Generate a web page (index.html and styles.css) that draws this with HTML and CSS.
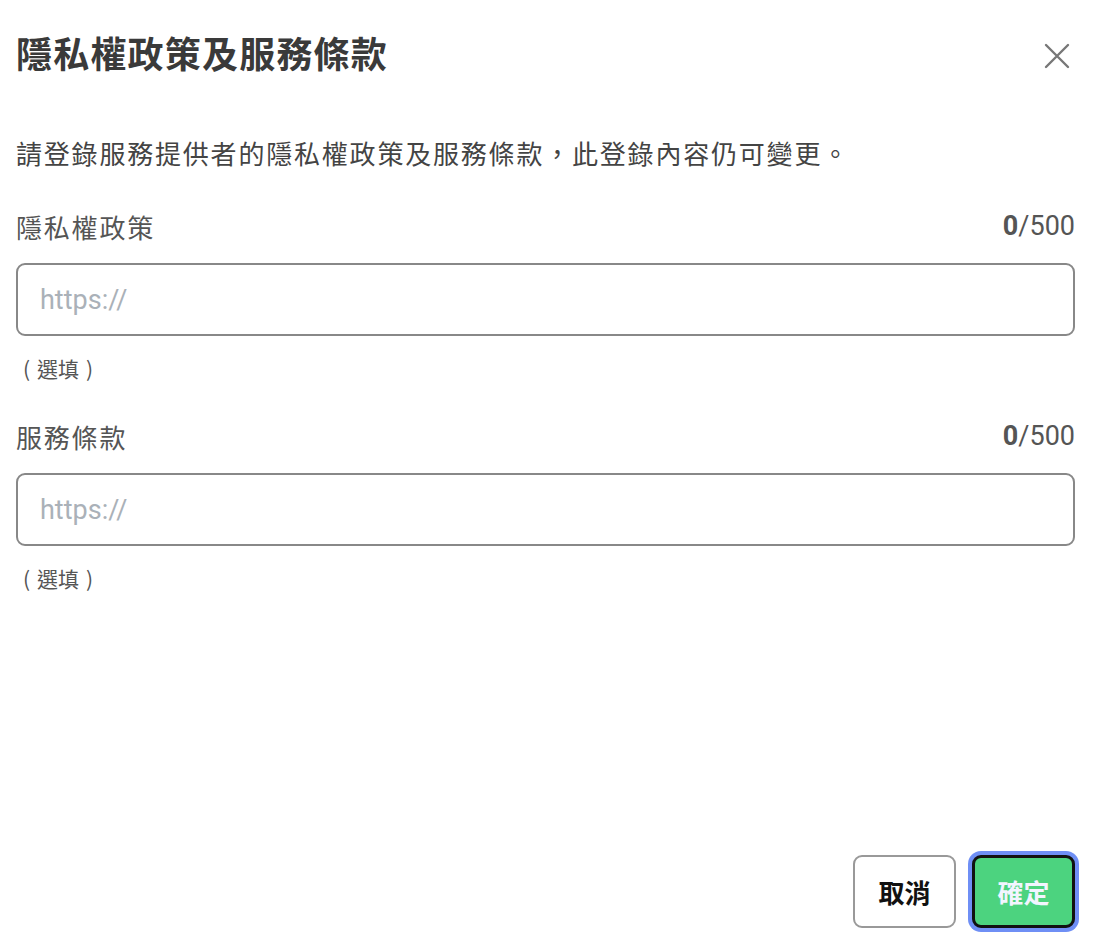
FILE: index.html
```html
<!DOCTYPE html>
<html lang="zh-TW">

<head>
    <meta charset="UTF-8">
    <meta name="viewport" content="width=device-width, initial-scale=1.0">
    <title>隱私權政策及服務條款</title>
    <link rel="stylesheet" href="styles.css">
</head>

<body>
    <div class="dialog">
        <div class="dialog-header">
            <h1 class="dialog-title">隱私權政策及服務條款</h1>
            <button class="close-button" aria-label="關閉">
                <svg width="28" height="28" viewBox="0 0 28 28">
                    <path d="M3 3 L25 25 M25 3 L3 25" stroke="#777" stroke-width="2.4" stroke-linecap="round" fill="none" />
                </svg>
            </button>
        </div>

        <p class="dialog-description">請登錄服務提供者的隱私權政策及服務條款，此登錄內容仍可變更。</p>

        <div class="field">
            <div class="field-label">
                <span>隱私權政策</span>
                <span class="counter"><strong>0</strong>/500</span>
            </div>
            <input class="field-input" type="text" placeholder="https://">
            <p class="field-hint"><span class="paren">(</span>選填<span class="paren">)</span></p>
        </div>

        <div class="field">
            <div class="field-label">
                <span>服務條款</span>
                <span class="counter"><strong>0</strong>/500</span>
            </div>
            <input class="field-input" type="text" placeholder="https://">
            <p class="field-hint"><span class="paren">(</span>選填<span class="paren">)</span></p>
        </div>

        <div class="dialog-footer">
            <button class="btn btn-cancel">取消</button>
            <button class="btn btn-confirm">確定</button>
        </div>
    </div>
</body>

</html>
```

FILE: styles.css
```css
body {
    margin: 0;
    padding: 0;
    background-color: #ffffff;
    font-family: Roboto, "Noto Sans CJK TC", sans-serif;
    color: #333333;
}

.dialog {
    box-sizing: border-box;
    min-height: 941px;
    padding: 32px 25px 13px 16px;
    display: flex;
    flex-direction: column;
}

.dialog-header {
    display: flex;
    align-items: center;
    justify-content: space-between;
    height: 48px;
}

.dialog-title {
    margin: 0;
    font-size: 36px;
    line-height: 48px;
    font-weight: 700;
    color: #3a3a3a;
    letter-spacing: 1.2px;
}

.close-button {
    background: none;
    border: none;
    padding: 0;
    margin-right: 4px;
    width: 28px;
    height: 28px;
    cursor: pointer;
}

.dialog-description {
    margin: 55px 0 0 0;
    font-size: 26px;
    line-height: 40px;
    letter-spacing: 1.8px;
    color: #444444;
}

.field {
    margin-top: 31px;
}

.field + .field {
    margin-top: 33px;
}

.field-label {
    display: flex;
    justify-content: space-between;
    align-items: center;
    height: 40px;
    font-size: 26px;
    letter-spacing: 1.8px;
    color: #555555;
}

.counter {
    font-size: 27px;
    letter-spacing: 0;
    color: #555555;
}

.counter strong {
    font-weight: 700;
}

.field-input {
    display: block;
    box-sizing: border-box;
    width: 100%;
    height: 73px;
    margin-top: 17px;
    padding: 0 22px;
    border: 2px solid #888888;
    border-radius: 9px;
    font-family: Roboto, "Noto Sans CJK TC", sans-serif;
    font-size: 27px;
    color: #333333;
    outline: none;
}

.field-input::placeholder {
    color: #aab1b8;
}

.field-hint {
    margin: 17px 0 0 0;
    font-family: "Noto Sans CJK TC", sans-serif;
    font-size: 21px;
    line-height: 30px;
    color: #555555;
}

.field-hint .paren {
    display: inline-block;
    width: 1em;
    text-align: center;
}

.dialog-footer {
    margin-top: auto;
    display: flex;
    justify-content: flex-end;
    align-items: center;
    gap: 16px;
}

.btn {
    box-sizing: border-box;
    height: 73px;
    padding: 0;
    border-radius: 9px;
    font-family: "Noto Sans CJK TC", sans-serif;
    font-size: 26px;
    font-weight: 700;
    line-height: 1;
    cursor: pointer;
}

.btn-cancel {
    width: 103px;
    background-color: #ffffff;
    border: 2px solid #999999;
    color: #111111;
}

.btn-confirm {
    width: 103px;
    background-color: #4cd37f;
    border: 3px solid #111111;
    color: #f2f5ff;
    box-shadow: 0 0 0 4px #6f8ff5;
}
```
